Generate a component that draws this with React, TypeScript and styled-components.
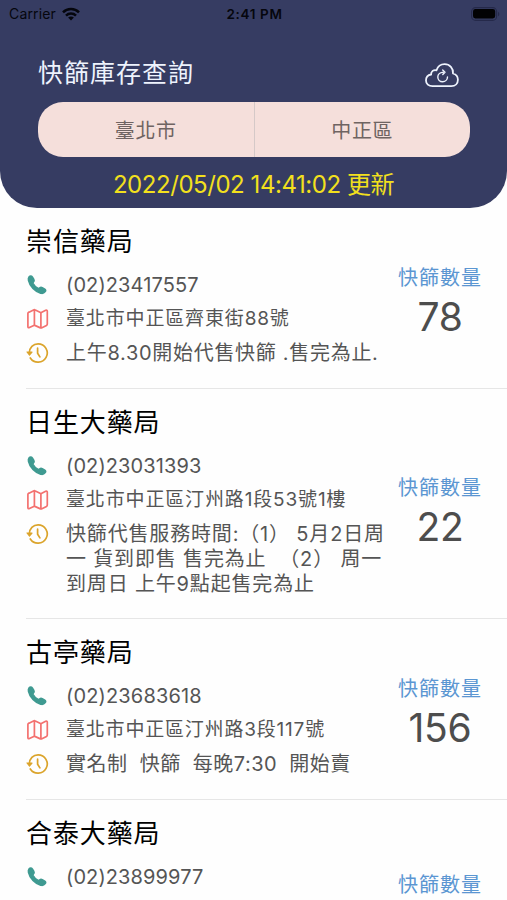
import React from 'react';
import styled, { createGlobalStyle } from 'styled-components';

const GlobalStyle = createGlobalStyle`
  * { box-sizing: border-box; }
  html, body { margin: 0; padding: 0; background: #fff; overflow: hidden; }
  body { font-family: Inter, "Noto Sans CJK TC", sans-serif; font-weight: 395; color: #555; }
`;

const Screen = styled.div`
  width: 507px;
  height: 900px;
  overflow: hidden;
  background: #fefefe;
`;

const Header = styled.header`
  height: 208px;
  background: #363c62;
  border-radius: 0 0 37px 37px;
`;

const StatusBar = styled.div`
  height: 28px;
  padding: 0 7px 0 9px;
  display: grid;
  grid-template-columns: 1fr auto 1fr;
  align-items: center;
  color: #05060d;
  font-size: 14px;
  font-weight: 400;
  line-height: 28px;
`;

const Carrier = styled.div`
  display: flex;
  align-items: center;
  gap: 6px;
  letter-spacing: 0.15px;
`;

const Clock = styled.div`
  font-size: 13.5px;
  font-weight: 600;
  letter-spacing: 0.65px;
`;

const BatterySlot = styled.div`
  display: flex;
  justify-content: flex-end;
`;

const TitleRow = styled.div`
  display: flex;
  align-items: center;
  justify-content: space-between;
  height: 74px;
  padding: 16px 48px 0 38px;
`;

const PageTitle = styled.h1`
  margin: 0;
  font-size: 25px;
  font-weight: 395;
  line-height: 36px;
  letter-spacing: 1px;
  color: #eef3fd;
`;

const CloudSlot = styled.div`
  display: flex;
  padding-top: 4px;
`;

const Filters = styled.div`
  display: flex;
  height: 55px;
  margin: 0 37px 0 38px;
  border-radius: 25px;
  overflow: hidden;
  background: #f5dfdb;
`;

const FilterButton = styled.button`
  flex: 1;
  border: 0;
  padding: 0;
  background: none;
  font-family: inherit;
  font-size: 20px;
  font-weight: 395;
  letter-spacing: 0.7px;
  color: #6f6462;
  & + & { border-left: 1.5px solid #d5c9c8; }
`;

const Updated = styled.div`
  height: 51px;
  line-height: 56px;
  text-align: center;
  font-size: 24px;
  letter-spacing: -0.45px;
  color: #f2e01d;
`;

const Card = styled.article<{ $last?: boolean }>`
  display: flex;
  margin-left: 26px;
  padding: 14px 0 ${p => (p.$last ? 0 : 17.3)}px;
  border-bottom: ${p => (p.$last ? 0 : 1)}px solid #e6e6e6;
`;

const Details = styled.div`
  width: 372px;
  flex: none;
`;

const Name = styled.h2`
  margin: 0 0 6px;
  font-size: 26px;
  font-weight: 395;
  line-height: 40px;
  letter-spacing: 0.9px;
  color: #000;
`;

const Row = styled.div`
  display: flex;
  align-items: flex-start;
  min-height: 34.2px;
  padding: 5px 0 4px;
  white-space: pre;
`;

const IconBox = styled.span`
  display: flex;
  width: 40px;
  height: 24px;
  align-items: center;
`;

const Text = styled.span<{ $size: number; $spacing: number }>`
  font-size: ${p => p.$size}px;
  letter-spacing: ${p => p.$spacing}px;
  line-height: 24.8px;
`;

const Stock = styled.div<{ $top: number }>`
  width: 84px;
  flex: none;
  padding-top: ${p => p.$top}px;
  text-align: center;
`;

const StockLabel = styled.div`
  font-size: 20px;
  letter-spacing: 1px;
  line-height: 30px;
  white-space: nowrap;
  color: #5b96d2;
`;

const StockCount = styled.div`
  font-size: 39px;
  line-height: 48px;
  letter-spacing: -0.2px;
  color: #4d4d4d;
`;

const WifiIcon = () => (
  <svg width="18" height="14" viewBox="0 0 18 14" fill="none" stroke="currentColor" strokeWidth="2.5">
    <path d="M1 5.3C5.4.8 12.6.8 17 5.3" />
    <path d="M4 8.7c2.8-2.8 7.2-2.8 10 0" />
    <path d="M9 13.4 6.1 10.5c1.6-1.5 4.2-1.5 5.8 0z" fill="currentColor" stroke="none" />
  </svg>
);

const BatteryIcon = () => (
  <svg width="29" height="14" viewBox="0 0 29 14">
    <rect x="0.6" y="0.6" width="25" height="12.8" rx="4" fill="none" stroke="#25294a" strokeWidth="1.1" />
    <rect x="2" y="2.1" width="22.2" height="9.4" rx="2.4" fill="#020204" />
    <path d="M27 4.7c1.8.8 1.8 3.8 0 4.6z" fill="#25294a" />
  </svg>
);

const CloudIcon = () => (
  <svg width="34" height="25" viewBox="0 0 34 25" fill="none" stroke="#eef3fd" strokeLinecap="round" strokeLinejoin="round">
    <path strokeWidth="1.8" d="M7.5 23.2C3.7 23.2 1 20.9 1 17.4c0-3.2 2.1-5.4 5.1-5.9-.2-3.1 2.6-5.1 5.4-4.2C12.8 3.4 16 1.2 19.6 1.2c5.2 0 8.8 4 8.4 9.3 2.8.8 4.9 3.1 4.9 6.2 0 3.9-2.7 6.5-6.6 6.5z" />
    <path strokeWidth="1.4" d="M18.4 9.2c-3 0-5.6 2-5.6 4.9 0 2.6 2.1 4.6 4.8 4.6s4.9-2.1 4.9-4.7" />
    <path strokeWidth="1.4" d="m17.7 7 2.3 2.2-2.2 2.3" />
  </svg>
);

const PhoneIcon = () => (
  <svg width="22" height="22" viewBox="0 0 22 22" fill="#3f9a91" stroke="#3f9a91" strokeWidth="1.6" strokeLinejoin="round">
    <path d="M3.1 2.9C4 1.9 5.5 1.8 6.3 2.9l1.5 2.6c.6 1 .3 2-.5 2.7l-.6.8c1.2 2.3 3.4 4.4 5.9 5.6l1-.6c.8-.7 1.7-.8 2.6-.3l2.6 1.5c1 .6 1.1 1.5.4 2.3-1.1 1.5-2.7 2.2-4.6 1.6C9.3 17.8 3.7 12.2 2.5 6.3c-.3-1.4-.1-2.5.6-3.4z" />
  </svg>
);

const MapIcon = () => (
  <svg width="23" height="22" viewBox="0 0 23 22" fill="none" stroke="#f3716f" strokeWidth="1.7" strokeLinejoin="round">
    <path d="M3 4.2 8 1.8q.4-.2.8 0l5.7 2.6q.4.2.8 0l4.4-2.2c.8-.4 1.6 0 1.6.9v13q0 .9-.8 1.3l-5.1 2.5q-.5.2-1 0l-5.6-2.5q-.5-.2-1 0l-4.4 2.2c-.8.4-1.5 0-1.5-.8V5.4q0-.8.8-1.2zM8.4 2.1v14.8M14.9 4.8v14.8" />
  </svg>
);

const ClockIcon = () => (
  <svg width="23" height="22" viewBox="0 0 23 22" fill="none" stroke="#dba42b" strokeWidth="1.7" strokeLinecap="round" strokeLinejoin="round">
    <path d="M3.3 11C3.3 5.6 7.2 1.8 12.1 1.8a9.2 9.2 0 1 1-7.8 14.2" />
    <path d="M11.6 6.2v5l2.3 3.7" />
    <path d="M1 10h5l-2.6 3z" fill="#dba42b" strokeWidth="1.2" />
  </svg>
);

interface Line { text: string; size: number; spacing: number }
interface Pharmacy {
  name: string;
  phone: Line;
  address?: Line;
  hours?: Line;
  count?: number;
  top: number;
}

const pharmacies: Pharmacy[] = [
  {
    name: '崇信藥局',
    phone: { text: '(02)23417557', size: 20, spacing: 0.1 },
    address: { text: '臺北市中正區齊東街88號', size: 19, spacing: 0.85 },
    hours: { text: '上午8.30開始代售快篩 .售完為止.', size: 20, spacing: 0.7 },
    count: 78,
    top: 41,
  },
  {
    name: '日生大藥局',
    phone: { text: '(02)23031393', size: 20, spacing: 0.1 },
    address: { text: '臺北市中正區汀州路1段53號1樓', size: 19, spacing: 0.85 },
    hours: { text: '快篩代售服務時間:（1） 5月2日周\n一 貨到即售 售完為止  （2） 周一\n到周日 上午9點起售完為止', size: 20, spacing: 0.83 },
    count: 22,
    top: 70,
  },
  {
    name: '古亭藥局',
    phone: { text: '(02)23683618', size: 20, spacing: 0.15 },
    address: { text: '臺北市中正區汀州路3段117號', size: 19, spacing: 0.8 },
    hours: { text: '實名制  快篩  每晚7:30  開始賣', size: 20, spacing: 0.48 },
    count: 156,
    top: 41,
  },
  {
    name: '合泰大藥局',
    phone: { text: '(02)23899977', size: 20, spacing: 0.1 },
    top: 56,
  },
];

const InfoRow = ({ icon, line }: { icon: React.ReactNode; line: Line }) => (
  <Row>
    <IconBox>{icon}</IconBox>
    <Text $size={line.size} $spacing={line.spacing}>{line.text}</Text>
  </Row>
);

const PharmacyCard = ({ data }: { data: Pharmacy }) => (
  <Card $last={data.count === undefined}>
    <Details>
      <Name>{data.name}</Name>
      <InfoRow icon={<PhoneIcon />} line={data.phone} />
      {data.address && <InfoRow icon={<MapIcon />} line={data.address} />}
      {data.hours && <InfoRow icon={<ClockIcon />} line={data.hours} />}
    </Details>
    <Stock $top={data.top}>
      <StockLabel>快篩數量</StockLabel>
      {data.count !== undefined && <StockCount>{data.count}</StockCount>}
    </Stock>
  </Card>
);

export default function App() {
  return (
    <Screen lang="zh-Hant">
      <GlobalStyle />
      <Header>
        <StatusBar>
          <Carrier>Carrier <WifiIcon /></Carrier>
          <Clock>2:41 PM</Clock>
          <BatterySlot><BatteryIcon /></BatterySlot>
        </StatusBar>
        <TitleRow>
          <PageTitle>快篩庫存查詢</PageTitle>
          <CloudSlot><CloudIcon /></CloudSlot>
        </TitleRow>
        <Filters>
          <FilterButton>臺北市</FilterButton>
          <FilterButton>中正區</FilterButton>
        </Filters>
        <Updated>2022/05/02 14:41:02 更新</Updated>
      </Header>
      <main>
        {pharmacies.map(p => <PharmacyCard key={p.name} data={p} />)}
      </main>
    </Screen>
  );
}
